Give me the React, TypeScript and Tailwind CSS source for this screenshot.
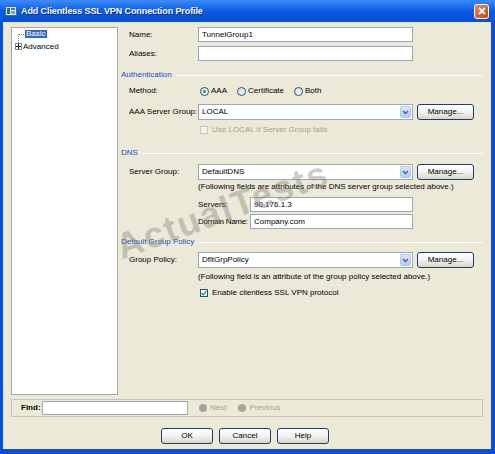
import React from 'react';

const FONT = { fontFamily: '"Liberation Sans", Arial, sans-serif' };

function Section({ title }: { title: string }) {
  return (
    <div className="flex items-center h-[12px] gap-[5px]">
      <span className="text-[#1550c8] whitespace-nowrap">{title}</span>
      <div className="flex-1 h-px bg-[#cfcbb8] border-b border-white" />
    </div>
  );
}

function TextBox({ value, className = '' }: { value?: string; className?: string }) {
  return (
    <div className={`h-[15px] bg-white border border-[#9aa7b5] flex items-center px-[3px] text-black ${className}`}>
      {value}
    </div>
  );
}

function Combo({ value }: { value: string }) {
  return (
    <div className="w-[215px] h-[16px] bg-white border border-[#9aa7b5] flex items-center pl-[3px] pr-px">
      <span className="flex-1">{value}</span>
      <div className="w-[11px] h-[12px] rounded-[2px] bg-gradient-to-b from-[#dce6fb] to-[#b7cbf4] border border-[#b4c6ee] flex items-center justify-center">
        <svg width="7" height="5" viewBox="0 0 7 5">
          <path d="M1 1 L3.5 3.5 L6 1" stroke="#4d6185" strokeWidth="1.4" fill="none" />
        </svg>
      </div>
    </div>
  );
}

function XpButton({ label, w = 'w-[57px]' }: { label: string; w?: string }) {
  return (
    <div className={`${w} h-[16px] rounded-[3px] border border-[#1c3d6e] bg-gradient-to-b from-white via-[#f4f3ee] to-[#d8d5c8] flex items-center justify-center text-black`}>
      {label}
    </div>
  );
}

function Radio({ checked, label }: { checked?: boolean; label: string }) {
  return (
    <div className="flex items-center gap-[2px]">
      <div className="w-[9px] h-[9px] rounded-full border border-[#1c5180] bg-gradient-to-br from-[#dcdcd6] to-white flex items-center justify-center">
        {checked && <div className="w-[3px] h-[3px] rounded-full bg-[#21a121]" />}
      </div>
      <span>{label}</span>
    </div>
  );
}

function Row({ label, children, className = '' }: { label: string; children: React.ReactNode; className?: string }) {
  return (
    <div className={`flex items-center pl-[8px] ${className}`}>
      <span className="w-[69px] shrink-0 whitespace-nowrap">{label}</span>
      {children}
    </div>
  );
}

export default function App() {
  return (
    <div className="w-[495px] h-[454px] flex flex-col bg-[#0a4fd8] text-[8px] text-black leading-none" style={FONT}>
      {/* title bar */}
      <div className="h-[22px] shrink-0 flex items-center pl-[5px] pr-[6px] bg-gradient-to-b from-[#3b8cf8] via-[#0b5be4] to-[#0a4fd0]">
        <svg width="12" height="12" viewBox="0 0 12 12" className="shrink-0">
          <rect x="0.5" y="1.5" width="11" height="9" fill="#d9e6f5" stroke="#3b6aa0" />
          <rect x="2" y="3" width="3" height="6" fill="#2f7a3a" />
          <rect x="6" y="3" width="4" height="2" fill="#4a79c9" />
          <rect x="6" y="6" width="4" height="3" fill="#7da4d8" />
        </svg>
        <span className="ml-[4px] text-white font-bold text-[9px] tracking-[-0.1px] [text-shadow:1px_1px_0_#0a2a80]">
          Add Clientless SSL VPN Connection Profile
        </span>
        <div className="ml-auto w-[15px] h-[15px] rounded-[3px] border border-white bg-gradient-to-br from-[#e8866a] to-[#c4401c] flex items-center justify-center">
          <svg width="8" height="8" viewBox="0 0 8 8">
            <path d="M1 1 L7 7 M7 1 L1 7" stroke="white" strokeWidth="1.8" />
          </svg>
        </div>
      </div>

      {/* body */}
      <div className="flex-1 ml-[3px] mr-[4px] mb-[5px] bg-[#ece9d8] flex flex-col pl-[8px] pr-[8px] pt-[5px] relative">
        <div className="flex h-[368px]">
          {/* tree */}
          <div className="w-[107px] shrink-0 bg-white border border-[#a9a89c] relative">
            <div className="absolute left-[6px] top-[6px] w-px h-[9px] border-l border-dotted border-[#8a8a8a]" />
            <div className="absolute left-[6px] top-[6px] w-[8px] h-px border-t border-dotted border-[#8a8a8a]" />
            <div className="absolute left-[13px] top-[2px] px-px h-[8px] bg-[#316ac5] text-white flex items-center">Basic</div>
            <div className="absolute left-[3px] top-[15px] w-[7px] h-[7px] border border-[#7a8a99] bg-white flex items-center justify-center">
              <svg width="5" height="5" viewBox="0 0 5 5">
                <path d="M0 2.5 H5 M2.5 0 V5" stroke="#222" strokeWidth="1" />
              </svg>
            </div>
            <div className="absolute left-[11px] top-[14px] h-[9px] flex items-center">Advanced</div>
          </div>

          {/* form */}
          <div className="flex-1 ml-[3px] flex flex-col">
            <Row label="Name:">
              <TextBox value="TunnelGroup1" className="w-[215px]" />
            </Row>
            <Row label="Aliases:" className="mt-[4px]">
              <TextBox className="w-[215px]" />
            </Row>
            <div className="mt-[8px]"><Section title="Authentication" /></div>
            <Row label="Method:" className="mt-[4px] h-[12px]">
              <div className="flex items-center gap-[10px] ml-[2px]">
                <Radio checked label="AAA" />
                <Radio label="Certificate" />
                <Radio label="Both" />
              </div>
            </Row>
            <Row label="AAA Server Group:" className="mt-[7px]">
              <Combo value="LOCAL" />
              <div className="ml-[4px]"><XpButton label="Manage..." /></div>
            </Row>
            <div className="mt-[4px] h-[12px] pl-[79px] flex items-center gap-[4px] text-[#a3a190]">
              <div className="w-[8px] h-[8px] border border-[#c9c7ba] bg-[#f4f3ee]" />
              <span>Use LOCAL if Server Group fails</span>
            </div>
            <div className="mt-[11px]"><Section title="DNS" /></div>
            <Row label="Server Group:" className="mt-[5px]">
              <Combo value="DefaultDNS" />
              <div className="ml-[4px]"><XpButton label="Manage..." /></div>
            </Row>
            <div className="mt-[1px] h-[12px] pl-[77px] flex items-center whitespace-nowrap">
              (Following fields are attributes of the DNS server group selected above.)
            </div>
            <div className="mt-[4px] pl-[77px] flex items-center">
              <span className="w-[52px] shrink-0 whitespace-nowrap">Servers:</span>
              <TextBox value="90.176.1.3" className="w-[163px]" />
            </div>
            <div className="mt-[2px] pl-[77px] flex items-center">
              <span className="w-[52px] shrink-0 whitespace-nowrap tracking-[-0.3px]">Domain Name:</span>
              <TextBox value="Company.com" className="w-[163px]" />
            </div>
            <div className="mt-[7px]"><Section title="Default Group Policy" /></div>
            <Row label="Group Policy:" className="mt-[4px]">
              <Combo value="DfltGrpPolicy" />
              <div className="ml-[4px]"><XpButton label="Manage..." /></div>
            </Row>
            <div className="mt-[3px] h-[12px] pl-[77px] flex items-center whitespace-nowrap">
              (Following field is an attribute of the group policy selected above.)
            </div>
            <div className="mt-[4px] h-[12px] pl-[79px] flex items-center gap-[4px]">
              <div className="w-[8px] h-[8px] border border-[#1c5180] bg-white flex items-center justify-center">
                <svg width="6" height="6" viewBox="0 0 6 6">
                  <path d="M0.5 3 L2.3 4.8 L5.5 1" stroke="#21a121" strokeWidth="1.3" fill="none" />
                </svg>
              </div>
              <span>Enable clientless SSL VPN protocol</span>
            </div>
          </div>
        </div>

        {/* find bar */}
        <div className="mt-[4px] h-[18px] border border-[#c8c5b3] flex items-center pl-[9px]">
          <span className="font-bold w-[21px]">Find:</span>
          <div className="w-[146px] h-[14px] bg-white border border-[#9aa7b5]" />
          <div className="ml-[11px] flex items-center gap-[3px] text-[#a3a190]">
            <div className="w-[8px] h-[8px] rounded-full bg-[#a8a698]" />
            <span>Next</span>
          </div>
          <div className="ml-[12px] flex items-center gap-[3px] text-[#a3a190]">
            <div className="w-[8px] h-[8px] rounded-full bg-[#a8a698]" />
            <span>Previous</span>
          </div>
        </div>

        {/* buttons */}
        <div className="mt-[11px] flex justify-center gap-[6px] pr-[4px]">
          <XpButton label="OK" w="w-[52px]" />
          <XpButton label="Cancel" w="w-[52px]" />
          <XpButton label="Help" w="w-[52px]" />
        </div>

        {/* watermark */}
        <div className="absolute left-[108px] top-[170px] w-[224px] h-[36px] -rotate-[20deg] text-[36px] font-bold tracking-[2px] text-[#8e8c80]/45 pointer-events-none whitespace-nowrap">
          ActualTests
        </div>
      </div>
    </div>
  );
}
